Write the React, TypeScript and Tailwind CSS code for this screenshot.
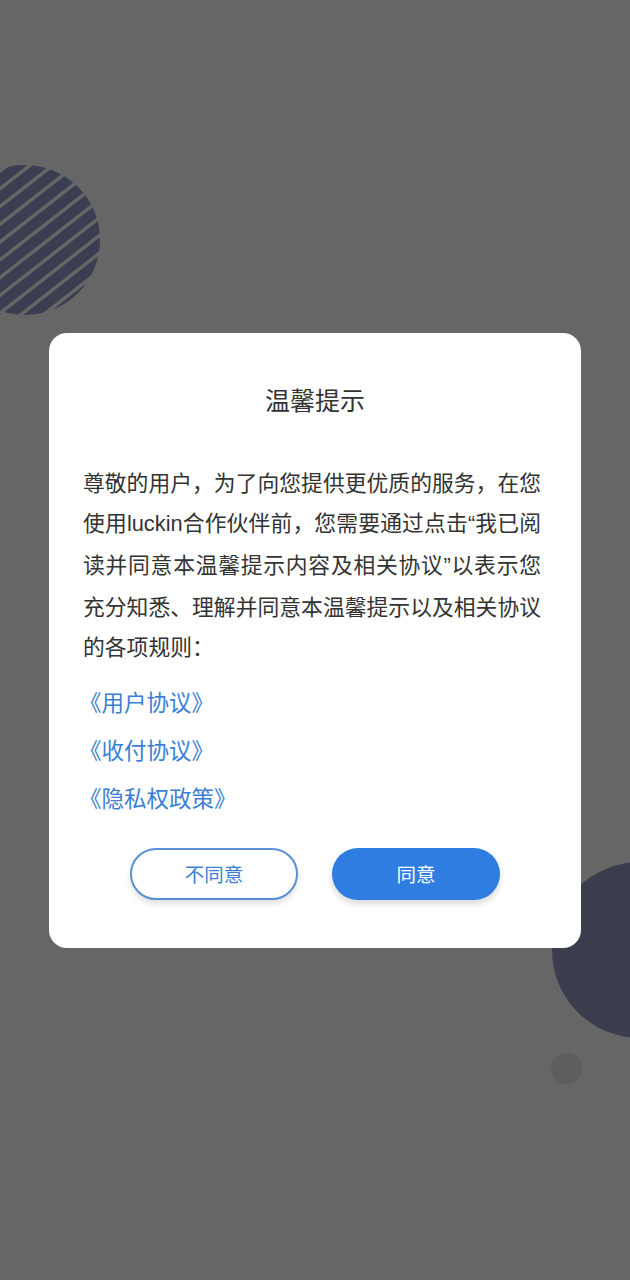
import React from 'react'

const body = [
  ['尊敬的用户，为了向您提供更优质的服务，在您'],
  ['使用', 'luckin', '合作伙伴前，您需要通过点击', '“', '我已阅'],
  ['读并同意本温馨提示内容及相关协议', '”', '以表示您'],
  ['充分知悉、理解并同意本温馨提示以及相关协议'],
]

const latin = new Set(['luckin', '“', '”'])

const links = ['《用户协议》', '《收付协议》', '《隐私权政策》']

function StripedCircle() {
  return (
    <svg width="180" height="180" viewBox="0 0 180 180" className="absolute left-[-65px] top-[150px]">
      <defs>
        <clipPath id="disc">
          <circle cx="90" cy="90" r="75" />
        </clipPath>
      </defs>
      <g clipPath="url(#disc)">
        <g transform="rotate(-38 90 90)">
          {Array.from({ length: 16 }).map((_, i) => (
            <rect key={i} x="-40" y={-20 + i * 14} width="260" height="10.5" fill="#3b3d50" />
          ))}
        </g>
      </g>
    </svg>
  )
}

function Line({ parts }: { parts: string[] }) {
  return (
    <div className="whitespace-nowrap text-justify [text-align-last:justify]">
      {parts.map((s, i) =>
        latin.has(s) ? (
          <span key={i} className="font-['Liberation_Sans']">{s}</span>
        ) : (
          <span key={i}>{s}</span>
        ),
      )}
    </div>
  )
}

export default function App() {
  return (
    <div
      className="relative h-[1280px] w-full overflow-hidden bg-[#666666] flex items-center justify-center"
      style={{ fontFamily: '"Noto Sans CJK SC", "Noto Sans", sans-serif' }}
    >
      <StripedCircle />
      <div className="absolute left-[552px] top-[862px] h-[176px] w-[176px] rounded-full bg-[#3b3d4f]" />
      <div className="absolute left-[551px] top-[1053px] h-[31px] w-[31px] rounded-full bg-[#5e5e5e]" />

      <div className="relative w-[532px] rounded-[18px] bg-white px-[34px] pt-[50px] pb-[48px]">
        <h1 className="text-center text-[25px] leading-[32px] text-[#333333]">温馨提示</h1>

        <div className="mt-[47px] w-[458px] text-[21.8px] leading-[40px] text-[#333333]">
          {body.map((line, i) => (
            <Line key={i} parts={line} />
          ))}
          <div className="whitespace-nowrap">的各项规则：</div>
        </div>

        <div className="mt-[11px] text-[22.5px] leading-[48px] text-[#3b7fd4]">
          {links.map((l) => (
            <div key={l} className="ml-[-4px]">{l}</div>
          ))}
        </div>

        <div className="mt-[27px] flex justify-center gap-[34px]">
          <button className="h-[52px] w-[168px] rounded-full border-2 border-[#5b8fd6] bg-white text-[19.5px] text-[#3b7fd4] shadow-[0_4px_6px_rgba(0,0,0,0.12)]">
            不同意
          </button>
          <button className="h-[52px] w-[168px] rounded-full bg-[#2f7de1] text-[19.5px] text-white shadow-[0_4px_6px_rgba(0,0,0,0.15)]">
            同意
          </button>
        </div>
      </div>
    </div>
  )
}
